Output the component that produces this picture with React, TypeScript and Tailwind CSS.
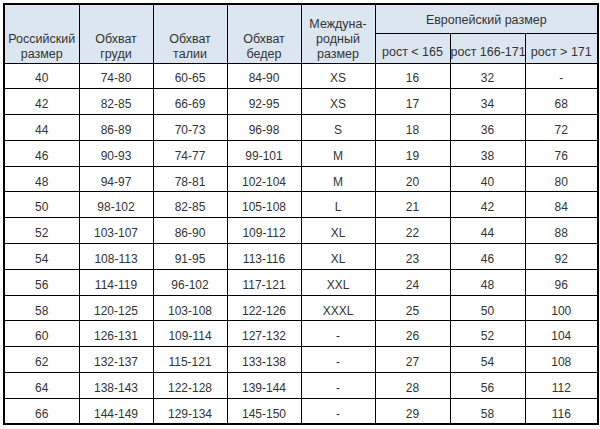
const rows = [
  ["40", "74-80", "60-65", "84-90", "XS", "16", "32", "-"],
  ["42", "82-85", "66-69", "92-95", "XS", "17", "34", "68"],
  ["44", "86-89", "70-73", "96-98", "S", "18", "36", "72"],
  ["46", "90-93", "74-77", "99-101", "M", "19", "38", "76"],
  ["48", "94-97", "78-81", "102-104", "M", "20", "40", "80"],
  ["50", "98-102", "82-85", "105-108", "L", "21", "42", "84"],
  ["52", "103-107", "86-90", "109-112", "XL", "22", "44", "88"],
  ["54", "108-113", "91-95", "113-116", "XL", "23", "46", "92"],
  ["56", "114-119", "96-102", "117-121", "XXL", "24", "48", "96"],
  ["58", "120-125", "103-108", "122-126", "XXXL", "25", "50", "100"],
  ["60", "126-131", "109-114", "127-132", "-", "26", "52", "104"],
  ["62", "132-137", "115-121", "133-138", "-", "27", "54", "108"],
  ["64", "138-143", "122-128", "139-144", "-", "28", "56", "112"],
  ["66", "144-149", "129-134", "145-150", "-", "29", "58", "116"],
];

const widths = [75, 74, 74, 74, 74, 75, 75, 73];

export default function App() {
  return (
    <div className="w-[600px] h-[429px] bg-white pt-[3px] pl-[3px] font-['Liberation_Sans',Arial,sans-serif] text-[#333]">
      <table className="table-fixed border-collapse border-2 border-black w-[594px]">
        <colgroup>
          {widths.map((w, i) => (
            <col key={i} style={{ width: w }} />
          ))}
        </colgroup>
        <thead className="bg-[#dce6f1] text-[12.5px] leading-[15px]">
          <tr className="h-[29px]">
            {[
              ["Российский", "размер"],
              ["Обхват", "груди"],
              ["Обхват", "талии"],
              ["Обхват", "бедер"],
              ["Междуна-", "родный", "размер"],
            ].map((lines, i) => (
              <th key={i} rowSpan={2} className="border border-black font-normal align-bottom text-center pb-[1px] px-0">
                {lines.map((l, j) => (
                  <div key={j}>{l}</div>
                ))}
              </th>
            ))}
            <th colSpan={3} className="border border-black font-normal text-center align-middle pt-[4px]">
              Европейский размер
            </th>
          </tr>
          <tr className="h-[30px]">
            {["рост < 165", "рост 166-171", "рост > 171"].map((t) => (
              <th key={t} className="border border-black font-normal align-bottom text-center pb-[3px] px-0 whitespace-nowrap">
                {t}
              </th>
            ))}
          </tr>
        </thead>
        <tbody className="text-[12px]">
          {rows.map((r, i) => (
            <tr key={i} className="h-[25.8px]">
              {r.map((c, j) => (
                <td key={j} className="border border-black text-center align-middle p-0 pt-[5px]">
                  {c}
                </td>
              ))}
            </tr>
          ))}
        </tbody>
      </table>
    </div>
  );
}
